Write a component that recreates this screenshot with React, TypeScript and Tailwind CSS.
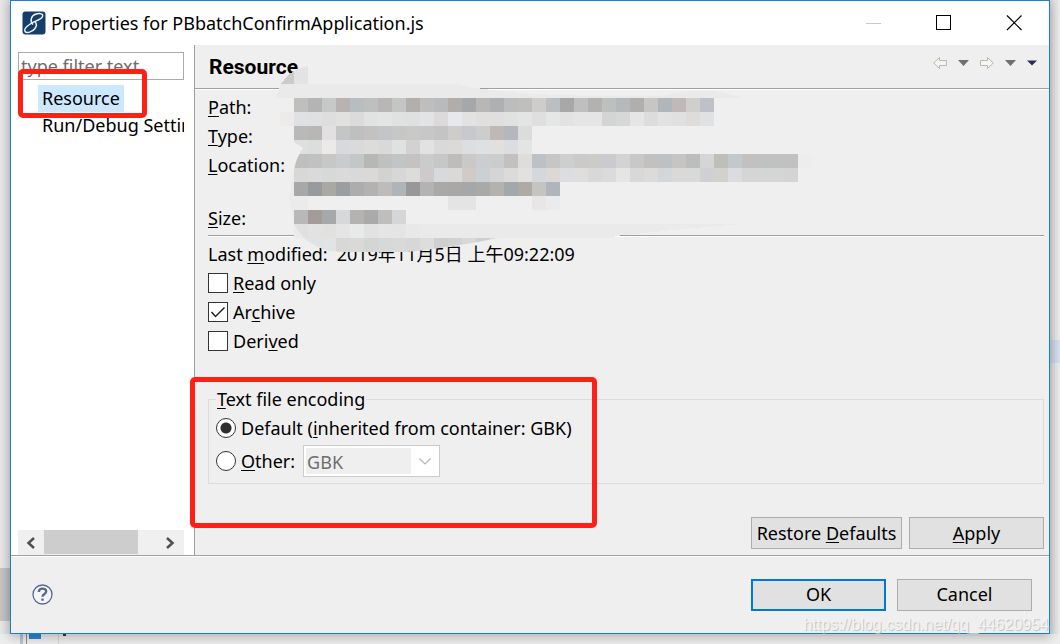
import { useState } from "react";
import type { ReactNode } from "react";

// Pixel colours of the redacted block, one row per line of 14px cells.
// "-" leaves the cell empty.
const MOSAIC = [
  "bfbfbd b4b4b4 c6c9c8 b8b3b0 b8bdc1 bebfbf b8b7b5 c4c6c5 b3afac bdbebd b8babb b0adab a5a7a9 b8b7b5 aeb0b1 bdbdbd bfbfbe cfcdcb bcbfc1 a8a8a8 bfbfc0 b4b2b0 bdc0bf b6b9bb b1afad c8c6c4 b1b6ba bfbab7 d1cfce bec1c8",
  "dfe1e4 dfe0e2 dfdede e1e1e0 dbdbdb e1e3e2 e4e4e2 e0e1e1 dfe0e0 e1e3e5 dddadc e6e8eb e2e2e2 e0dfdd dfdfdf e0e2e1 e4e4e4 dfdfdf e5e7e6 e2e2e2 e5e5e5 e5e5e5 d4d4d4 d6d8d7 e5e5e5 dcdcdc e2e2e2 e0e0e0 dedcdb dfe1e3",
  "b9b9b9 b8b7b5 e2e0e1 c3c6c5 bebfbf c3c2c0 c3c5c8 c7c7c7 c9c9c7 c7c7c7 c4c4c4 cfcdcc c8c9ce cdcdcd bfb8b4 b4b8be dadddb",
  "dfdfdf dcdddd ebeae8 d7d9dc dadada dcdcdb d9d9d9 dfe2e1 d2d2d2 e2e2e2 d9d9d9 dcdad8 dcdee2 dee0e3 e2e0df dbdde0 e3e5e4",
  "bfbfbd c0c1c0 c7c7c7 c9cbce c4c7c7 b7b7b5 bfc1c0 c2c5c5 c4c3c1 cacccb c6c8c7 bebdbb cac9c7 cbcdd0 caccce c2c1bf dfdddb bbc1c5 c8c6c5 cccfce cacaca cccbc9 c9cbce d3d3d3 c8c8c6 c3c1bf bcc1c4 c7c5c4 bbbebd d5d5d5 bfbfba c3c8cc c3c1bf c0c2c1 c0c2c1 c1c1c1 ebedef",
  "d8d8d6 dadada d7d9d8 d9dad9 d9d9d9 dad9d7 d2d2d1 d7d7d7 dcddda cecacc d7dadc d9d9d8 d1cbc8 cbd0d4 d5d5d5 dcdbd9 e2e1df d5d8db dbd8d6 dbdde0 e0dddd d8d8d8 dbdbdb e5e5e5 d8d8d8 dddbd9 d4d7da dbd9d8 d9d9d9 ced0d3 d3d1ce dadce0 d5d5d5 d4d6d5 d5d5d5 d4d4d4",
  "a8a8a8 989b9e a9a8a3 9b9ea1 adadad b2b2b0 bdbcba aeb4b8 989898 b3b3b3 aaa9a8 a9a8a6 a5a7aa a9a9a8 b4b2af a3a8ad aeaba5 c6c4c1 afb5ba",
  "ebebeb - - - - - - - - - - e4e4e4 e4e4e4 - - - - e9e7e5 e9ebed",
  "b8b8b8 a39c99 a5a9ac d6d8d9 b5b3b1 aaaaaa c0bebd d4d6d8",
  "e0e0df e2e2e2 e1e1df e5e5e5 e8eae9 e2e2e2 e5e5e5 e4e4e4 e8e8e8",
  "e0e2e3 e0e2e3 e1e3e5 d8d8d7 d9d9d8 d4d6d5 d7d9d8 d9d9d9 d7d7d7 dddddd cfcfcf d0d2d1 d8d8d8 cfcfcf dcdcdc e2e2e2 e0e0e0 d6d6d6",
].map((row) => row.split(" "));

function Redaction() {
  return (
    <svg
      className="pointer-events-none absolute top-[19px] left-[81px]"
      width="540"
      height="190"
      viewBox="276 64 540 190"
      shapeRendering="crispEdges"
      aria-hidden="true"
    >
      <defs>
        <clipPath id="brush">
          <path d="M308 66 Q286 72 276 98 L280 112 L280 126 L294 126 L294 142 L303 148 Q296 158 294 170 L289 196 L294 224 Q304 243 328 251 Q390 256 440 248 Q480 242 508 236 L816 236 L816 98 L308 98 Z" />
        </clipPath>
      </defs>
      <path
        d="M276 98 L281 84 H456 Q476 89 520 93 Q580 97 660 96 Q680 91 700 91 Q722 90 742 98 V224 Q680 229 620 235 L500 237 Q470 245 440 248 H320 Q290 235 294 224 H540 V98 Z"
        fill="#eaeaea"
      />
      <path d="M294 98 H742 V224 H294 Z" fill="#efefef" />
      <path d="M294 224 H742 Q680 229 615 236 V238 H294 Z" fill="#eaeaea" />
      <g clipPath="url(#brush)">
        <path d="M276 112 H294 V126 H276 Z" fill="#ecebea" />
        <path d="M288 168 H294 V224 H288 Z" fill="#ebebeb" />
        {MOSAIC.map((row, y) =>
          row.map(
            (c, x) =>
              c !== "-" && (
                <rect
                  key={`${x}-${y}`}
                  x={294 + x * 14}
                  y={98 + y * 14}
                  width="14"
                  height="14"
                  fill={`#${c}`}
                />
              )
          )
        )}
      </g>
      <path d="M281 84 Q287 75 294 71 V84 Z" fill="#cbcbcb" />
      <path d="M294 71 Q301 67 308 66 V84 H294 Z" fill="#e3e3e3" />
    </svg>
  );
}

// Underlined access key
function Key({ children }: { children: ReactNode }) {
  return <span className="underline decoration-1 underline-offset-2">{children}</span>;
}

function AppIcon() {
  return (
    <svg width="24" height="24" viewBox="0 0 24 24" aria-hidden="true">
      <rect x="0.5" y="0.5" width="23" height="23" rx="3" fill="#173e6b" />
      <path
        d="M11 13.500 C7.500 10.500 9 4.500 14 3 C18.500 1.800 21.500 3 20.500 5.500 C19.500 8.500 13 10 9 12.500 C5 15 1.500 18 3 20.500 C4.500 22.500 10.500 21 13 17.500 C14.800 15 14.500 12 12.500 10"
        fill="none"
        stroke="#f1f5fa"
        strokeWidth="1.400"
      />
    </svg>
  );
}

function Arrow({ flip }: { flip?: boolean }) {
  return (
    <svg
      width="14"
      height="12"
      viewBox="0 0 14 12"
      className={flip ? "-scale-x-100" : undefined}
      aria-hidden="true"
    >
      <path
        d="M6.500 0.500 L0.700 6 L6.500 11.500 V8.500 H13.500 V3.500 H6.500 Z"
        fill="#f6f5f0"
        stroke="#b9b6b1"
      />
    </svg>
  );
}

function Caret({ dark }: { dark?: boolean }) {
  return dark ? (
    <svg width="10" height="6" viewBox="0 0 10 6" aria-hidden="true">
      <path d="M0 0.500 H10 L5 5.500 Z" fill="#2b2b5c" />
    </svg>
  ) : (
    <svg width="11" height="6" viewBox="0 0 11 6" aria-hidden="true">
      <path d="M0 0 H11 L5.500 6 Z" fill="#6f6f74" />
    </svg>
  );
}

function TitleBar() {
  return (
    <header className="flex h-11 shrink-0 items-center bg-white pl-[11px]">
      <AppIcon />
      <h1 className="flex-1 pl-[5px] text-[18px] whitespace-nowrap">
        Properties for PBbatchConfirmApplication.js
      </h1>
      <div className="flex items-center gap-[54px] pr-[27px]">
        <button type="button" aria-label="Minimize">
          <svg width="16" height="16" viewBox="0 0 16 16">
            <path d="M0 8.500 H15" stroke="#c8c8c8" />
          </svg>
        </button>
        <button type="button" aria-label="Maximize">
          <svg width="16" height="16" viewBox="0 0 16 16">
            <rect x="0.5" y="0.5" width="14" height="14" fill="none" stroke="#000" />
          </svg>
        </button>
        <button type="button" aria-label="Close">
          <svg width="16" height="16" viewBox="0 0 16 16">
            <path d="M1 0.500 L15.500 15 M15.500 0.500 L1 15" stroke="#000" strokeWidth="1.200" />
          </svg>
        </button>
      </div>
    </header>
  );
}

function Sidebar() {
  return (
    <aside className="relative flex w-[183px] shrink-0 flex-col bg-white pt-[7px] pr-[10px] pl-[7px]">
      <input
        type="text"
        aria-label="Filter"
        placeholder="type filter text"
        className="h-7 w-full border border-[#ababab] bg-white px-[2px] text-[18px] outline-none placeholder:text-[#6d6d6d]"
      />
      <ul className="mt-[5px] flex-1 overflow-hidden pl-5 text-[18px] leading-[27px] whitespace-nowrap">
        <li>
          <span className="inline-block bg-[#cce8ff] px-1">Resource</span>
        </li>
        <li className="pl-1">Run/Debug Settings</li>
      </ul>
      <div className="flex h-[25px] bg-[#f0f0f0]">
        <button type="button" aria-label="Scroll left" className="flex w-[26px] items-center justify-center">
          <svg width="10" height="12" viewBox="0 0 10 12">
            <path d="M8 1 L2.500 6 L8 11" fill="none" stroke="#505050" strokeWidth="2.500" />
          </svg>
        </button>
        <div className="flex-1">
          <div className="h-6 w-[94px] bg-[#cdcdcd]" />
        </div>
        <button type="button" aria-label="Scroll right" className="flex w-7 items-center justify-center">
          <svg width="10" height="12" viewBox="0 0 10 12">
            <path d="M2 1 L7.500 6 L2 11" fill="none" stroke="#505050" strokeWidth="2.500" />
          </svg>
        </button>
      </div>
      <div className="pointer-events-none absolute top-6 left-[7px] h-[49px] w-[129px] rounded-[5px] border-[5px] border-[#ff2015]" />
    </aside>
  );
}

function CheckRow({ checked, children }: { checked?: boolean; children: ReactNode }) {
  const [on, setOn] = useState(!!checked);
  return (
    <label className="flex h-[29px] items-center gap-[5px]">
      <span className="relative mb-px flex size-5">
        <input
          type="checkbox"
          checked={on}
          onChange={() => setOn(!on)}
          className="size-5 appearance-none border border-[#333] bg-white"
        />
        {on && (
          <svg className="pointer-events-none absolute inset-0" width="20" height="20" viewBox="0 0 20 20">
            <path d="M3.500 10 L7.500 14.500 L16.500 5.500" fill="none" stroke="#222" strokeWidth="1.500" />
          </svg>
        )}
      </span>
      <span>{children}</span>
    </label>
  );
}

const RADIO =
  "mb-px size-5 appearance-none rounded-full border border-[#333] bg-white checked:bg-[radial-gradient(circle,#2e2e2e_5px,#fff_6px)]";

function Encoding() {
  const [mode, setMode] = useState("default");
  return (
    <fieldset className="relative mt-[29px] border border-[#dcdcdc] pr-2 pb-[6px] pl-[7px]">
      <legend className="px-px leading-[29px]">
        <Key>T</Key>ext file encoding
      </legend>
      <label className="flex h-[29px] items-center gap-[5px]">
        <input
          type="radio"
          name="encoding"
          className={RADIO}
          checked={mode === "default"}
          onChange={() => setMode("default")}
        />
        <span>
          Default (<Key>i</Key>nherited from container: GBK)
        </span>
      </label>
      <div className="mt-[2px] flex h-8 items-center gap-2">
        <label className="flex items-center gap-[5px]">
          <input
            type="radio"
            name="encoding"
            className={RADIO}
            checked={mode === "other"}
            onChange={() => setMode("other")}
          />
          <span>
            <Key>O</Key>ther:
          </span>
        </label>
        <div className="flex h-8 w-[137px] items-center border border-[#ccc] bg-white py-[2px] pl-[2px]">
          <select
            aria-label="Other encoding"
            disabled={mode === "default"}
            className="h-[26px] w-[105px] appearance-none bg-[#efefef] pb-[2px] pl-px text-[#6d6d6d]"
          >
            <option>GBK</option>
          </select>
          <svg className="mx-auto" width="12" height="7" viewBox="0 0 12 7" aria-hidden="true">
            <path d="M0.500 0.500 L6 6 L11.500 0.500" fill="none" stroke="#b5b5b5" strokeWidth="1.200" />
          </svg>
        </div>
      </div>
      <div className="pointer-events-none absolute -top-[37px] -left-[19px] h-[151px] w-[407px] rounded-[5px] border-[5px] border-[#ff2015]" />
    </fieldset>
  );
}

const BUTTON = "h-8 bg-[#e1e1e1] text-center text-[18px]";

function ResourcePage() {
  return (
    <main className="relative flex min-w-0 flex-1 flex-col border-l border-[#a0a0a0] bg-[#efefef]">
      <div className="flex h-11 shrink-0 items-center justify-between border-b border-[#a0a0a0] pr-3 pl-[14px] shadow-[0_1px_0_#fff]">
        <h2 className="pt-[2px] font-['Roboto',sans-serif] text-[21px] font-bold">Resource</h2>
        <div className="flex items-center gap-[11px] pb-2">
          <button type="button" aria-label="Back">
            <Arrow />
          </button>
          <button type="button" aria-label="Back history">
            <Caret />
          </button>
          <button type="button" aria-label="Forward">
            <Arrow flip />
          </button>
          <button type="button" aria-label="Forward history">
            <Caret />
          </button>
          <button type="button" aria-label="Menu">
            <Caret dark />
          </button>
        </div>
      </div>
      <div className="flex flex-1 flex-col pt-1 pr-[5px] pb-[6px] pl-[13px] text-[18px] leading-[29px]">
        <dl>
          <dt className="h-[29px]">
            <Key>P</Key>ath:
          </dt>
          <dt className="h-[29px]">
            <Key>T</Key>ype:
          </dt>
          <dt className="h-[53px]">
            <Key>L</Key>ocation:
          </dt>
          <dt className="h-[29px]">
            <Key>S</Key>ize:
          </dt>
        </dl>
        <div className="mt-[2px] mb-[3px] h-[2px] border-t border-[#a0a0a0] bg-white" />
        <p className="flex h-[29px] gap-[9px] whitespace-nowrap">
          <span>
            Last <Key>m</Key>odified:
          </span>
          <span>2019年11月5日 上午09:22:09</span>
        </p>
        <CheckRow>
          <Key>R</Key>ead only
        </CheckRow>
        <CheckRow checked>
          Ar<Key>c</Key>hive
        </CheckRow>
        <CheckRow>
          Deri<Key>v</Key>ed
        </CheckRow>
        <Encoding />
        <div className="mt-auto flex justify-end gap-[7px]">
          <button type="button" className={`${BUTTON} w-[151px] border border-[#adadad]`}>
            Restore <Key>D</Key>efaults
          </button>
          <button type="button" className={`${BUTTON} w-[135px] border border-[#adadad]`}>
            <Key>A</Key>pply
          </button>
        </div>
      </div>
      <Redaction />
    </main>
  );
}

function Footer() {
  return (
    <footer className="relative flex h-[78px] shrink-0 items-center justify-between border-t border-[#a0a0a0] bg-[#efefef] pr-[17px] pl-[21px] shadow-[inset_0_1px_0_#fff]">
      <button type="button" aria-label="Help">
        <svg width="21" height="21" viewBox="0 0 21 21">
          <circle cx="10.500" cy="10.500" r="9.500" fill="#f4f5f8" stroke="#5a6a88" strokeWidth="1.300" />
          <path
            d="M6.800 8 C6.800 3.600 14.200 3.600 14.200 7.500 C14.200 10 10.500 10 10.500 12.800 M10.500 14.500 V16.800"
            fill="none"
            stroke="#5a6a88"
            strokeWidth="2.400"
          />
        </svg>
      </button>
      <div className="flex gap-[11px]">
        <button type="button" className={`${BUTTON} w-[135px] border-2 border-[#0078d7]`}>
          OK
        </button>
        <button type="button" className={`${BUTTON} w-[135px] border border-[#adadad]`}>
          Cancel
        </button>
      </div>
      <span className="pointer-events-none absolute right-0 bottom-0 font-['Liberation_Sans',sans-serif] text-[16px] leading-4 whitespace-nowrap text-[#f3f3f3] [text-shadow:1px_1px_1px_#bdbdbd]">
        https://blog.csdn.net/qq_44620954
      </span>
    </footer>
  );
}

export default function App() {
  return (
    <div className="flex h-screen flex-col overflow-hidden bg-[#e9e9e9] font-['Noto_Sans','Noto_Sans_CJK_SC',sans-serif] text-black">
      <div className="flex min-h-0 flex-1">
        <div className="flex w-[10px] shrink-0 flex-col justify-end bg-[linear-gradient(to_right,#e8e8e8,#d9d9d9)] pb-[13px]">
          <div className="h-[53px] bg-[linear-gradient(to_right,#c6c6c6,#b8b8b8)]" />
        </div>
        <div className="z-10 flex min-w-0 flex-1 flex-col border border-[#1a7fd4] shadow-[0_3px_10px_rgba(0,0,0,0.25)]">
          <TitleBar />
          <div className="flex min-h-0 flex-1">
            <Sidebar />
            <ResourcePage />
          </div>
          <Footer />
        </div>
        <div className="w-[10px] shrink-0 bg-[linear-gradient(to_right,#d4d4d4,#ececec)] pt-[340px]">
          <div className="h-[23px] bg-[linear-gradient(to_right,#c3cbdc,#d8dfef)]" />
        </div>
      </div>
      <div className="flex h-[10px] shrink-0 bg-[#ededed] pl-5">
        <div className="w-[3px] bg-[#b9c3d0]" />
        <div className="ml-[3px] w-px bg-[#8e8e8e]" />
        <div className="ml-[2px] h-[5px] w-3 bg-[#2d86cf]" />
        <div className="ml-[17px] w-px bg-[#d5d5d5]" />
        <div className="ml-1 h-[2px] w-[3px] bg-[#333]" />
      </div>
    </div>
  );
}
